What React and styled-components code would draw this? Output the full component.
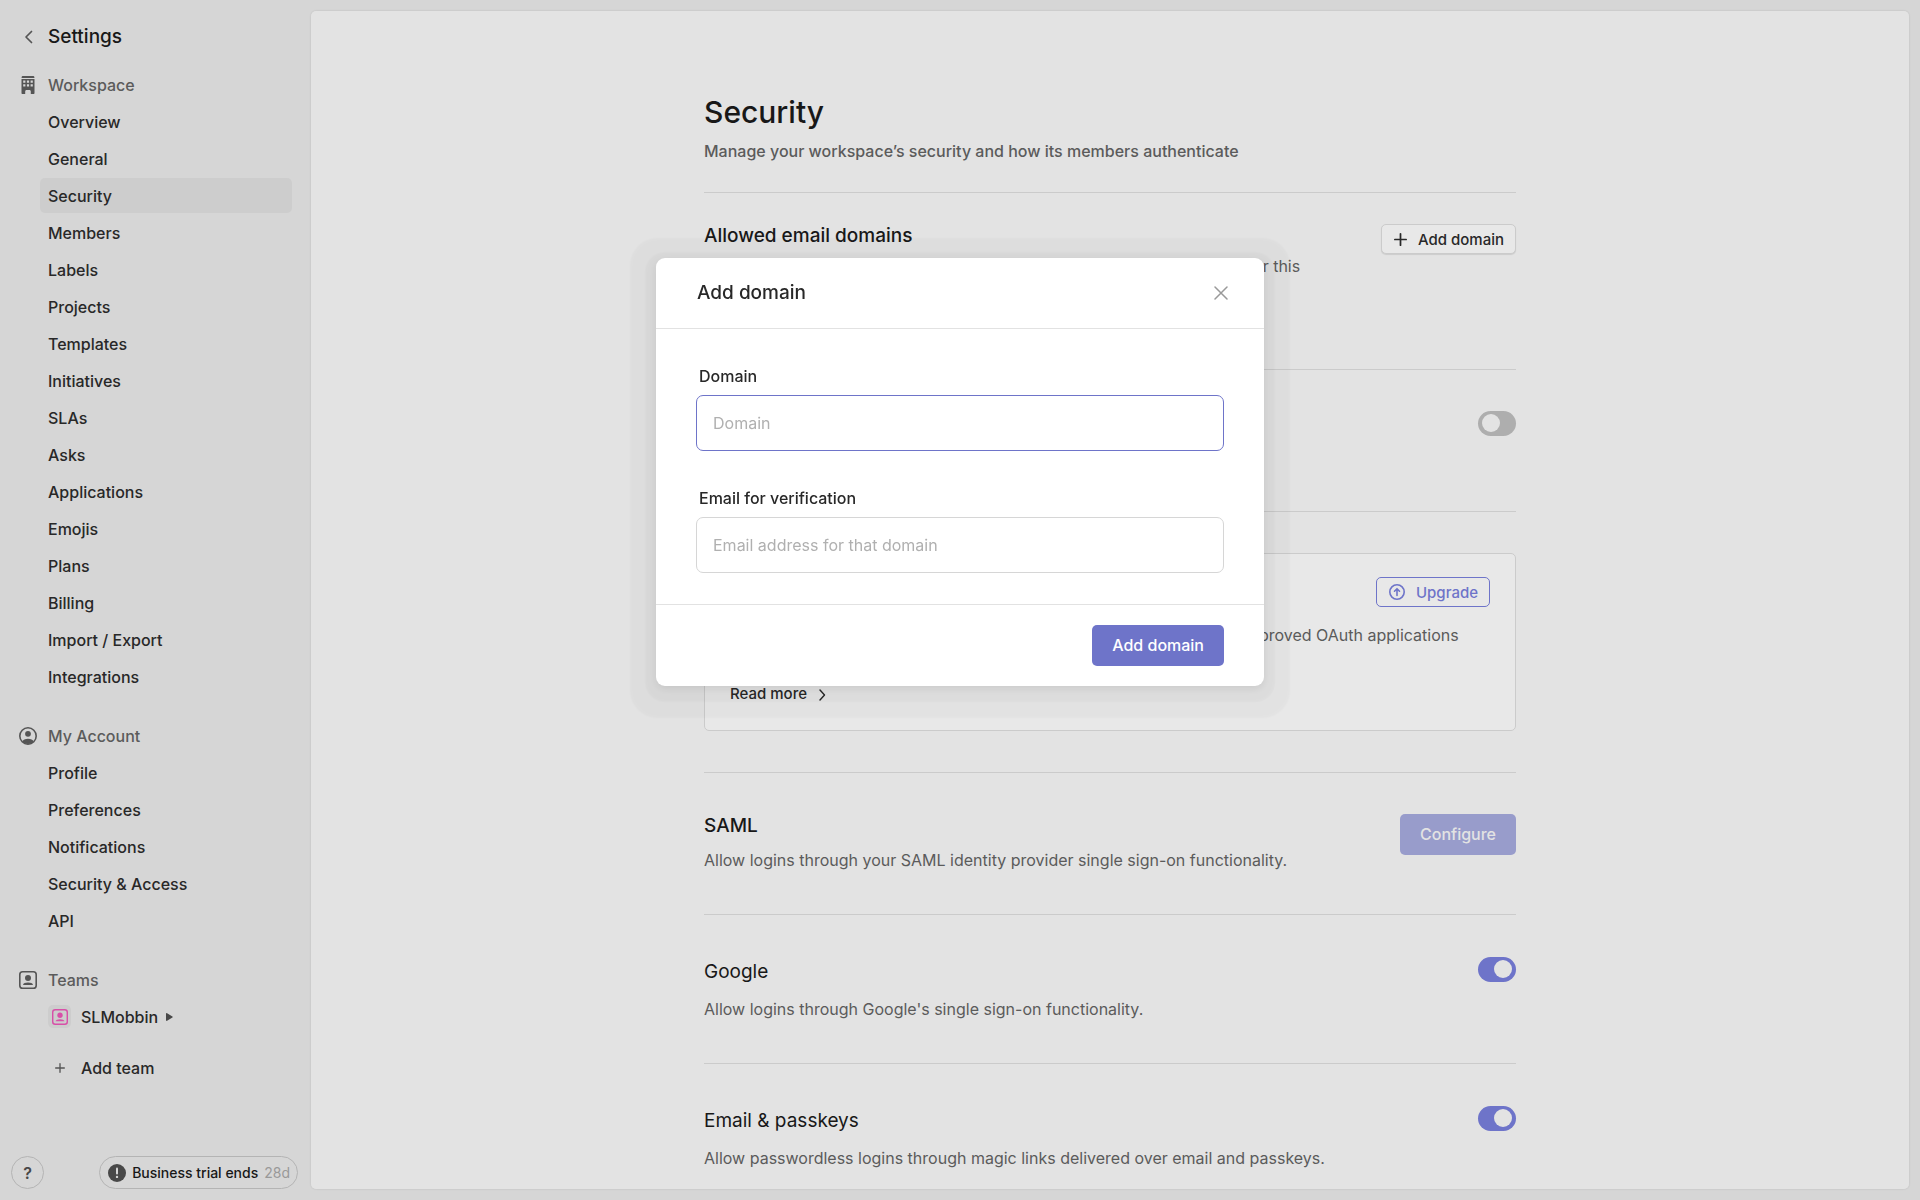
import React, { useState } from 'react'
import styled, { createGlobalStyle } from 'styled-components'

const GlobalStyle = createGlobalStyle`
    * {
        box-sizing: border-box;
    }

    body {
        margin: 0;
        background-color: #d6d6d6;
        color: #282828;
        font-family: Inter, "Liberation Sans", sans-serif;
        font-size: 16px;
        line-height: 24px;
        -webkit-font-smoothing: antialiased;
    }

    h1, h2, p, ul {
        margin: 0;
        padding: 0;
    }

    button, input {
        font-family: inherit;
        font-size: 16px;
    }
`

const Page = styled.div`
    display: grid;
    grid-template-columns: 311px 1fr;
    height: 100vh;
`

const SideBar = styled.aside`
    display: flex;
    flex-direction: column;
    padding: 17px 13px 11px 11px;
`

const BackLink = styled.a`
    display: flex;
    align-items: center;
    height: 40px;
    margin-bottom: 10px;
    color: #181818;
    font-size: 19px;
    font-weight: 500;
    text-decoration: none;
`

const IconCell = styled.span`
    display: flex;
    justify-content: center;
    width: 34px;
    margin-right: 3px;
    color: #555;
`

const NavSection = styled.nav`
    margin-bottom: 24px;
`

const NavTitle = styled.h2`
    display: flex;
    align-items: center;
    height: 36px;
    margin-bottom: 1px;
    color: #5b5b5b;
    font-size: 16px;
    font-weight: 500;
`

const NavList = styled.ul`
    display: flex;
    flex-direction: column;
    gap: 2px;
    padding: 0 6px 0 29px;
    list-style-type: none;
`

const NavLink = styled.a`
    display: flex;
    align-items: center;
    height: 35px;
    padding: 0 8px;
    border-radius: 5px;
    background-color: ${props => props.$active ? '#cdcdcd' : 'transparent'};
    color: #282828;
    font-weight: 500;
    text-decoration: none;
`

const TeamBadge = styled.span`
    display: flex;
    align-items: center;
    justify-content: center;
    width: 23px;
    height: 23px;
    margin-right: 10px;
    border-radius: 5px;
    background-color: ${props => props.$plain ? 'transparent' : '#cdcdcd'};
    color: ${props => props.$plain ? '#555' : '#d84fa8'};
`

const Arrow = styled.svg`
    margin-left: 8px;
`

const AddTeam = styled.button`
    display: flex;
    align-items: center;
    height: 35px;
    margin: 16px 0 0 37px;
    padding: 0;
    border: none;
    background: none;
    color: #282828;
    font-weight: 500;
`

const SideFooter = styled.div`
    display: flex;
    justify-content: space-between;
    margin-top: auto;
`

const HelpButton = styled.button`
    width: 33px;
    height: 33px;
    padding: 0;
    border: 1px solid #b4b4b4;
    border-radius: 50%;
    background: none;
    color: #484848;
    font-weight: 600;
`

const TrialButton = styled.button`
    display: flex;
    align-items: center;
    gap: 6px;
    height: 33px;
    padding: 0 7px 0 8px;
    border: 1px solid #b4b4b4;
    border-radius: 17px;
    background: none;
    color: #181818;
    font-size: 14px;
    font-weight: 500;

    span {
        color: #999;
        font-weight: 400;
    }
`

const Panel = styled.main`
    display: flex;
    justify-content: center;
    margin: 11px 11px 11px 0;
    padding: 83px 40px 0;
    overflow-y: auto;
    scrollbar-width: none;
    border-radius: 5px;
    background-color: #e3e3e3;
    box-shadow: 0 0 2px rgba(0, 0, 0, 0.15);
`

const Content = styled.div`
    width: 100%;
    max-width: 812px;
`

const PageHeader = styled.header`
    padding-bottom: 29px;
    border-bottom: 1px solid #cbcbcb;
`

const PageTitle = styled.h1`
    margin-bottom: 9px;
    color: #181818;
    font-size: 30px;
    font-weight: 500;
    line-height: 36px;
`

const Muted = styled.p`
    color: #5b5b5b;
    font-weight: ${props => props.$strong ? 500 : 400};
`

const Section = styled.section`
    display: flex;
    align-items: flex-start;
    justify-content: space-between;
    padding: ${props => props.$pad || '41px 0 42px'};
    border-bottom: 1px solid #cbcbcb;
`

const SectionText = styled.div`
    display: flex;
    flex-direction: column;
    gap: ${props => props.$gap || 10}px;
    max-width: 660px;
`

const SectionTitle = styled.h2`
    color: #181818;
    font-size: 19px;
    font-weight: 500;
    line-height: 24px;
`

const SwitchLabel = styled.label`
    color: #181818;
    font-size: 19px;
    line-height: 30px;
`

const Switch = styled.input`
    appearance: none;
    flex: none;
    width: 38px;
    height: 25px;
    margin: 0;
    padding: 3px 4px;
    border-radius: 13px;
    background-color: #aeaeae;

    &::before {
        content: '';
        display: block;
        width: 18px;
        height: 18px;
        border-radius: 50%;
        background-color: #e3e3e3;
    }

    &:checked {
        background-color: #6e74c9;
    }

    &:checked::before {
        margin-left: auto;
    }
`

const SmallButton = styled.button`
    display: flex;
    align-items: center;
    gap: 11px;
    height: 30px;
    padding: 0 11px 0 12px;
    border: 1px solid ${props => props.$accent ? '#6e74c9' : '#cbcbcb'};
    border-radius: 5px;
    background-color: #e8e8e8;
    box-shadow: ${props => props.$accent ? 'none' : '0 1px 1px rgba(0, 0, 0, 0.1)'};
    color: ${props => props.$accent ? '#6e74c9' : '#282828'};
    font-size: 15px;
    font-weight: 500;
`

const PrimaryButton = styled.button`
    flex: none;
    height: 41px;
    padding: 0 20px 2px;
    border: none;
    border-radius: 5px;
    background-color: ${props => props.disabled ? '#989ccb' : '#6e74c9'};
    color: ${props => props.disabled ? '#e3e3e3' : '#fff'};
    font-weight: 500;
`

const Card = styled.div`
    flex: 1;
    padding: 23px 25px 24px;
    border: 1px solid #cbcbcb;
    border-radius: 5px;
    background-color: #e8e8e8;
`

const CardHeader = styled.div`
    display: flex;
    align-items: center;
    justify-content: space-between;
    margin-bottom: 16px;
`

const ReadMore = styled.a`
    display: flex;
    align-items: center;
    gap: 11px;
    margin-top: 11px;
    color: #282828;
    font-size: 15px;
    font-weight: 500;
    text-decoration: none;
`

const Overlay = styled.div`
    position: fixed;
    inset: 0;
    z-index: 10;
    display: flex;
    align-items: flex-start;
    justify-content: center;
    padding-top: 258px;
`

const Modal = styled.form`
    width: 608px;
    border-radius: 9px;
    background-color: #fff;
    box-shadow:
        0 3px 8px rgba(0, 0, 0, 0.08),
        0 5px 2px 11px rgba(0, 0, 0, 0.03),
        0 6px 2px 26px rgba(0, 0, 0, 0.025);
`

const ModalHeader = styled.div`
    display: flex;
    align-items: center;
    justify-content: space-between;
    height: 71px;
    padding: 0 36px 0 41px;
    border-bottom: 1px solid #e2e2e2;

    h2 {
        color: #282828;
        font-size: 19px;
        font-weight: 500;
    }
`

const CloseButton = styled.button`
    display: flex;
    padding: 0;
    border: none;
    background: none;
    color: #999;
`

const ModalBody = styled.div`
    display: flex;
    flex-direction: column;
    gap: 35px;
    padding: 35px 40px 31px;
`

const Field = styled.div`
    display: flex;
    flex-direction: column;
    gap: 7px;

    label {
        padding-left: 3px;
        color: #282828;
        font-weight: 500;
    }

    input {
        height: 56px;
        padding: 0 16px;
        border: 1px solid #d6d6d6;
        border-radius: 7px;
        outline: none;
        background-color: #fff;
        color: #282828;
    }

    input::placeholder {
        color: #b0b0b0;
    }

    input:focus {
        border-color: #6e74c9;
    }
`

const ModalFooter = styled.div`
    display: flex;
    justify-content: flex-end;
    padding: 20px 40px;
    border-top: 1px solid #e2e2e2;
`

const workspaceLinks = [
    'Overview', 'General', 'Security', 'Members', 'Labels', 'Projects', 'Templates', 'Initiatives',
    'SLAs', 'Asks', 'Applications', 'Emojis', 'Plans', 'Billing', 'Import / Export', 'Integrations'
]

const accountLinks = ['Profile', 'Preferences', 'Notifications', 'Security & Access', 'API']

const ChevronIcon = ({ left }) => (
    <svg width='9' height='14' viewBox='0 0 9 14' fill='none' stroke='currentColor' strokeWidth={left ? 1.7 : 1.4} strokeLinecap='round' strokeLinejoin='round'>
        <path d={left ? 'M7.5 1.5 2 7l5.5 5.5' : 'M2 3l4.500 5L2 13'} />
    </svg>
)

const BuildingIcon = () => (
    <svg width='14' height='18' viewBox='0 0 14 18' fill='currentColor'>
        <path d='M2 0h10c.9 0 1.400.6 1.400 1.400v.5H.6v-.5C.6.600 1.100 0 2 0Z' />
        <path fillRule='evenodd' d='M.5 2.900h13v14c0 .6-.4 1.100-1 1.100H9.800v-2.600c0-.8-.6-1.400-1.400-1.400H5.600c-.8 0-1.400.6-1.400 1.400V18H1.500c-.6 0-1-.5-1-1.100ZM2.200 4.600v2.200h2.200V4.600Zm3.700 0v2.200h2.200V4.600Zm3.700 0v2.200h2.200V4.600ZM2.200 8.300v2.200h2.200V8.300Zm3.700 0v2.200h2.200V8.300Zm3.700 0v2.200h2.200V8.300Z' />
    </svg>
)

const AccountIcon = () => (
    <svg width='18' height='18' viewBox='0 0 18 18' fill='none'>
        <circle cx='9' cy='9' r='8.200' stroke='currentColor' strokeWidth='1.600' />
        <circle cx='9' cy='6.800' r='2.900' fill='currentColor' />
        <path d='M3.400 14.200C4.300 12.600 6 11.700 9 11.700s4.700.9 5.600 2.500C13.300 15.900 11.400 17 9 17s-4.300-1.100-5.600-2.800Z' fill='currentColor' />
    </svg>
)

const TeamIcon = ({ size }) => (
    <svg width={size} height={size} viewBox='0 0 18 18' fill='none'>
        <rect x='.8' y='.8' width='16.400' height='16.400' rx='2.800' stroke='currentColor' strokeWidth='1.600' />
        <circle cx='9' cy='7' r='3' fill='currentColor' />
        <path d='M4 13.900c.3-1.500 2.300-2.300 5-2.300s4.700.8 5 2.300Z' fill='currentColor' />
    </svg>
)

const PlusIcon = ({ size, weight }) => (
    <svg width={size} height={size} viewBox='0 0 12 12' stroke='currentColor' strokeWidth={weight} strokeLinecap='round'>
        <path d='M6 .8v10.400M.8 6h10.400' />
    </svg>
)

const UpgradeIcon = () => (
    <svg width='16' height='16' viewBox='0 0 16 16' fill='none' stroke='currentColor' strokeWidth='1.600'>
        <circle cx='8' cy='8' r='7.200' />
        <path d='M8 11.400V5M5.500 7.200 8 4.700l2.500 2.500' strokeLinecap='round' strokeLinejoin='round' />
    </svg>
)

const AlertIcon = () => (
    <svg width='18' height='18' viewBox='0 0 18 18'>
        <circle cx='9' cy='9' r='9' fill='#484848' />
        <path d='M9 4.600v5' stroke='#d6d6d6' strokeWidth='2' strokeLinecap='round' />
        <circle cx='9' cy='12.900' r='1.200' fill='#d6d6d6' />
    </svg>
)

const CloseIcon = () => (
    <svg width='14' height='14' viewBox='0 0 14 14' stroke='currentColor' strokeWidth='1.500' strokeLinecap='round'>
        <path d='M1 1l12 12M13 1 1 13' />
    </svg>
)

const LinkGroup = ({ icon, title, links, active }) => (
    <NavSection aria-label={title}>
        <NavTitle><IconCell>{icon}</IconCell>{title}</NavTitle>
        <NavList>
            {
                links.map(link => (
                    <li key={link}>
                        <NavLink href='#' $active={link === active}>{link}</NavLink>
                    </li>
                ))
            }
        </NavList>
    </NavSection>
)

const SwitchSection = ({ id, title, text, gap, pad, initial }) => {
    const [on, setOn] = useState(initial)

    return (
        <Section $pad={pad}>
            <SectionText $gap={gap}>
                <SwitchLabel htmlFor={id}>{title}</SwitchLabel>
                <Muted>{text}</Muted>
            </SectionText>
            <Switch id={id} type='checkbox' checked={on} onChange={() => setOn(!on)} />
        </Section>
    )
}

const AddDomainModal = ({ onClose }) => (
    <Overlay>
        <Modal role='dialog' aria-labelledby='modal-title' onSubmit={e => e.preventDefault()}>
            <ModalHeader>
                <h2 id='modal-title'>Add domain</h2>
                <CloseButton type='button' aria-label='Close' onClick={onClose}><CloseIcon /></CloseButton>
            </ModalHeader>
            <ModalBody>
                <Field>
                    <label htmlFor='domain'>Domain</label>
                    <input id='domain' type='text' placeholder='Domain' autoFocus />
                </Field>
                <Field>
                    <label htmlFor='email'>Email for verification</label>
                    <input id='email' type='email' placeholder='Email address for that domain' />
                </Field>
            </ModalBody>
            <ModalFooter>
                <PrimaryButton type='submit'>Add domain</PrimaryButton>
            </ModalFooter>
        </Modal>
    </Overlay>
)

const App = () => {
    const [modalOpen, setModalOpen] = useState(true)

    return (
        <>
            <GlobalStyle />
            <Page>
                <SideBar>
                    <BackLink href='#'><IconCell><ChevronIcon left /></IconCell>Settings</BackLink>
                    <LinkGroup icon={<BuildingIcon />} title='Workspace' links={workspaceLinks} active='Security' />
                    <LinkGroup icon={<AccountIcon />} title='My Account' links={accountLinks} />
                    <NavSection aria-label='Teams'>
                        <NavTitle><IconCell><TeamIcon size={18} /></IconCell>Teams</NavTitle>
                        <NavList>
                            <li>
                                <NavLink href='#'>
                                    <TeamBadge><TeamIcon size={16} /></TeamBadge>
                                    SLMobbin
                                    <Arrow width='7' height='8' viewBox='0 0 7 8' fill='#484848'>
                                        <path d='M0 .8v6.400c0 .6.6.900 1.100.6l5.300-3.200c.5-.3.5-.900 0-1.200L1.100.2C.6-.1 0 .2 0 .8Z' />
                                    </Arrow>
                                </NavLink>
                            </li>
                        </NavList>
                        <AddTeam type='button'>
                            <TeamBadge $plain><PlusIcon size={10} weight={1.6} /></TeamBadge>
                            Add team
                        </AddTeam>
                    </NavSection>
                    <SideFooter>
                        <HelpButton type='button' aria-label='Help'>?</HelpButton>
                        <TrialButton type='button'><AlertIcon />Business trial ends <span>28d</span></TrialButton>
                    </SideFooter>
                </SideBar>
                <Panel>
                    <Content>
                        <PageHeader>
                            <PageTitle>Security</PageTitle>
                            <Muted $strong>Manage your workspace’s security and how its members authenticate</Muted>
                        </PageHeader>
                        <Section $pad='31px 0 67px'>
                            <SectionText $gap={6}>
                                <SectionTitle>Allowed email domains</SectionTitle>
                                <Muted>Anyone with an email address from these domains is allowed to sign up for this workspace.</Muted>
                            </SectionText>
                            <SmallButton type='button' onClick={() => setModalOpen(true)}>
                                <PlusIcon size={13} weight={1.6} />Add domain
                            </SmallButton>
                        </Section>
                        <SwitchSection
                            id='invite'
                            title='Invite link'
                            text='Let anyone with the link join your workspace.'
                            gap={4}
                            initial={false}
                        />
                        <Section $pad='41px 0'>
                            <Card>
                                <CardHeader>
                                    <SectionTitle>Application approvals</SectionTitle>
                                    <SmallButton type='button' $accent><UpgradeIcon />Upgrade</SmallButton>
                                </CardHeader>
                                <Muted>
                                    Control the apps members can connect to this workspace with pre-approved OAuth applications
                                    and a review process.
                                </Muted>
                                <ReadMore href='#'>Read more <ChevronIcon /></ReadMore>
                            </Card>
                        </Section>
                        <Section>
                            <SectionText>
                                <SectionTitle>SAML</SectionTitle>
                                <Muted>Allow logins through your SAML identity provider single sign-on functionality.</Muted>
                            </SectionText>
                            <PrimaryButton type='button' disabled>Configure</PrimaryButton>
                        </Section>
                        <SwitchSection
                            id='google'
                            title='Google'
                            text="Allow logins through Google's single sign-on functionality."
                            pad='42px 0'
                            initial={true}
                        />
                        <SwitchSection
                            id='passkeys'
                            title='Email & passkeys'
                            text='Allow passwordless logins through magic links delivered over email and passkeys.'
                            pad='42px 0'
                            initial={true}
                        />
                    </Content>
                </Panel>
            </Page>
            {modalOpen && <AddDomainModal onClose={() => setModalOpen(false)} />}
        </>
    )
}

export default App
